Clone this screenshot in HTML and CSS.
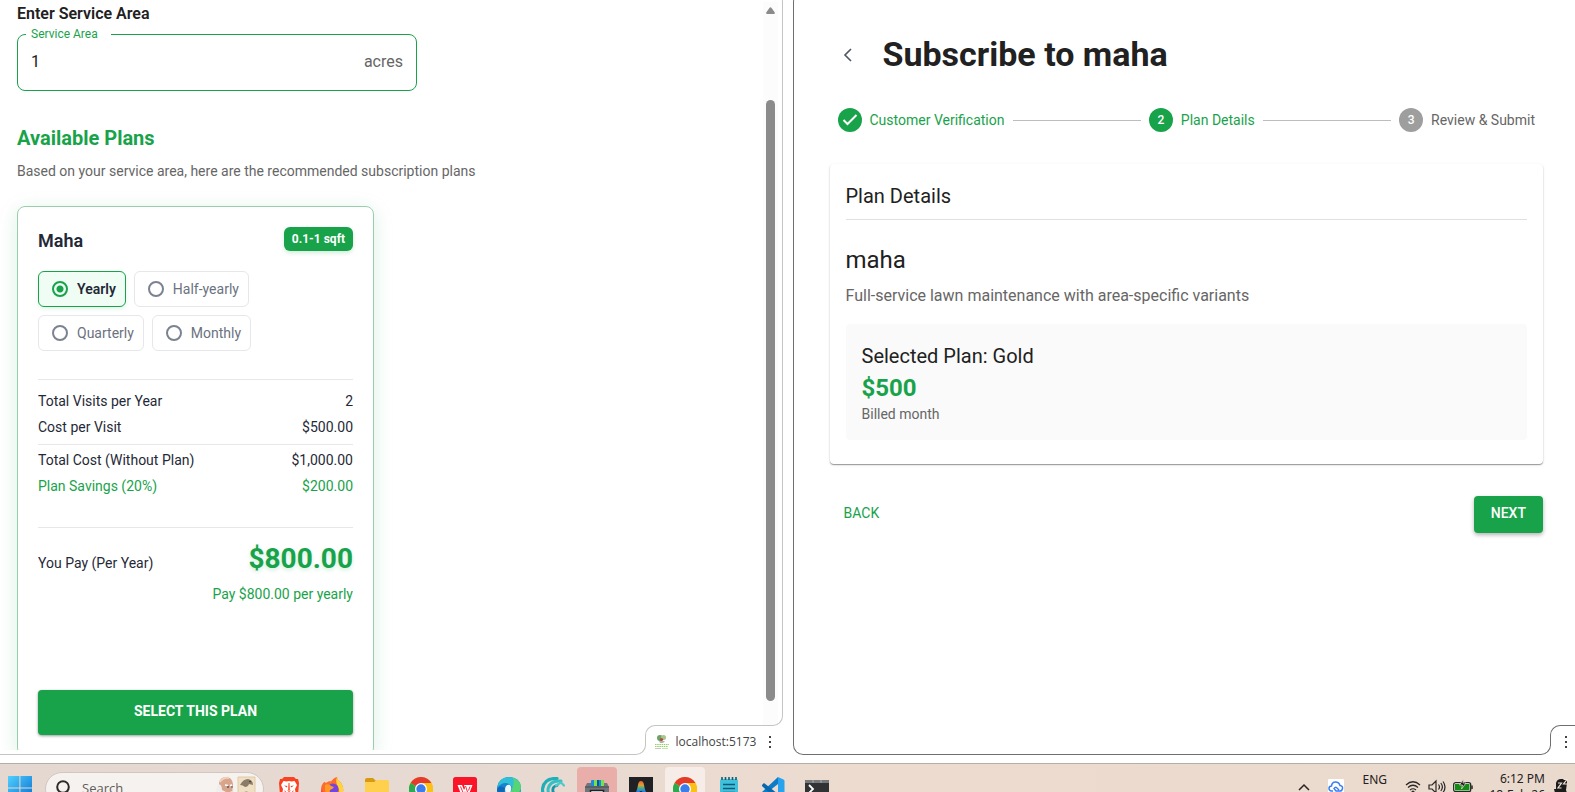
FILE: index.html
```html
<!DOCTYPE html>
<html lang="en">
<head>
<meta charset="utf-8">
<meta name="viewport" content="width=device-width, initial-scale=1">
<title>Subscribe to maha</title>
<link rel="stylesheet" href="styles.css">
</head>
<body>
<svg class="defs" aria-hidden="true">
  <symbol id="chrome" viewBox="0 0 24 24">
    <circle cx="12" cy="12" r="12" fill="#fbc116"/>
    <path d="M12 12 1.6 6A12 12 0 0 1 22.4 6Z" fill="#e33b2e"/>
    <path d="M1.6 6A12 12 0 0 0 12 24l5-9-5-3Z" fill="#2da94f"/>
    <path d="M12 6h10.4A12 12 0 0 1 12 24l5.2-9Z" fill="#fbc116"/>
    <circle cx="12" cy="12" r="6" fill="#fff"/><circle cx="12" cy="12" r="4.700" fill="#3b7ded"/>
  </symbol>
</svg>
<div class="panes">
  <section class="pane pane--left">
    <main class="plans">
      <h2 class="plans__heading">Enter Service Area</h2>
      <div class="field">
        <label class="field__label" for="area">Service Area</label>
        <input class="field__input" id="area" type="text" value="1">
        <span class="field__unit">acres</span>
      </div>
      <h1 class="plans__title">Available Plans</h1>
      <p class="plans__note">Based on your service area, here are the recommended subscription plans</p>
      <article class="card">
        <header class="card__head"><h3 class="card__name">Maha</h3><span class="badge">0.1-1 sqft</span></header>
        <div class="cycles">
          <label class="cycle cycle--on"><input class="cycle__radio" type="radio" name="cycle" checked>Yearly</label>
          <label class="cycle"><input class="cycle__radio" type="radio" name="cycle">Half-yearly</label>
          <label class="cycle"><input class="cycle__radio" type="radio" name="cycle">Quarterly</label>
          <label class="cycle"><input class="cycle__radio" type="radio" name="cycle">Monthly</label>
        </div>
        <dl class="costs costs--visits">
          <div class="cost"><dt>Total Visits per Year</dt><dd>2</dd></div>
          <div class="cost"><dt>Cost per Visit</dt><dd>$500.00</dd></div>
        </dl>
        <dl class="costs costs--total">
          <div class="cost"><dt>Total Cost (Without Plan)</dt><dd>$1,000.00</dd></div>
          <div class="cost cost--saving"><dt>Plan Savings (20%)</dt><dd>$200.00</dd></div>
        </dl>
        <div class="pay"><span>You Pay (Per Year)</span><strong class="pay__sum">$800.00</strong></div>
        <p class="pay__note">Pay $800.00 per yearly</p>
        <button class="select" type="button">SELECT THIS PLAN</button>
      </article>
    </main>
    <div class="scrollbar">
      <svg class="scrollbar__arrow" viewBox="0 0 9 7"><path d="M3.600.8a1 1 0 0 1 1.800 0L8.800 5.500Q9 7 8 7H1Q0 7 .2 5.500Z" fill="#8b8b8b"/></svg>
      <div class="scrollbar__thumb"></div>
    </div>
    <div class="edge"></div>
    <div class="shelf"></div>
    <div class="tab">
      <svg class="tab__logo" viewBox="0 0 16 16"><circle cx="6" cy="4" r="3" fill="#6ba368"/><circle cx="9.500" cy="3.500" r="2.500" fill="#a9c48d"/><circle cx="7.500" cy="5.500" r="1.600" fill="#b5483c"/><path d="M5 7h6l-2 2H6Z" fill="#a9b9a4"/><path d="M1 10.500h14M1 12.500h13" stroke="#8fd45e" stroke-width="1.200" stroke-dasharray="1.500 .7"/><path d="M1 14.500h6" stroke="#c6c6c6"/><path d="M8 14.500h6" stroke="#c4e6a9"/></svg>
      <span class="tab__host">localhost:5173</span>
      <button class="dots" type="button" aria-label="Tab menu"><i></i><i></i><i></i></button>
    </div>
  </section>
  <section class="pane pane--right">
    <main class="checkout">
      <header class="checkout__head">
        <button class="back-icon" type="button" aria-label="Go back"><svg width="10" height="16" viewBox="0 0 10 16" fill="none" stroke="#4b5563" stroke-width="1.600"><path d="M9 3 3 9l6 6"/></svg></button>
        <h1 class="checkout__title">Subscribe to maha</h1>
      </header>
      <ol class="steps">
        <li class="step"><span class="step__dot"><svg width="16" height="12" viewBox="0 0 16 12" fill="none" stroke="#fff" stroke-width="2"><path d="m1.500 6 4 4 9-9"/></svg></span>Customer Verification</li>
        <li class="steps__line"></li>
        <li class="step"><span class="step__dot">2</span>Plan Details</li>
        <li class="steps__line"></li>
        <li class="step step--next"><span class="step__dot">3</span>Review &amp; Submit</li>
      </ol>
      <section class="details">
        <h2 class="details__title">Plan Details</h2>
        <h3 class="details__name">maha</h3>
        <p class="details__text">Full-service lawn maintenance with area-specific variants</p>
        <div class="chosen">
          <h4 class="chosen__title">Selected Plan: Gold</h4>
          <p class="chosen__price">$500</p>
          <p class="chosen__note">Billed month</p>
        </div>
      </section>
      <div class="actions">
        <button class="actions__back" type="button">BACK</button>
        <button class="actions__next" type="button">NEXT</button>
      </div>
    </main>
    <div class="edge"></div>
    <div class="shelf"></div>
    <div class="tab">
      <button class="dots" type="button" aria-label="Tab menu"><i></i><i></i><i></i></button>
    </div>
  </section>
</div>
<footer class="taskbar">
  <div class="taskbar__row">
    <button class="start" type="button" aria-label="Start"><svg width="24" height="24" viewBox="0 0 24 24"><defs><linearGradient id="w" x1="0" y1="0" x2="1" y2="1"><stop offset="0" stop-color="#4fd0ff"/><stop offset="1" stop-color="#0a6fd0"/></linearGradient></defs><path d="M0 0h11.400v11.400H0zM12.400 0H24v11.400H12.400zM0 12.400h11.400V24H0zM12.400 12.400H24V24H12.400z" fill="url(#w)"/></svg></button>
    <div class="search">
      <svg width="16" height="18" viewBox="0 0 16 18" fill="none" stroke="#2d2a29" stroke-width="2"><circle cx="7" cy="7" r="5.800"/><path d="m11 11.500 4 5"/></svg>
      <input class="search__input" type="text" aria-label="Search" placeholder="Search">
      <svg class="search__art" width="40" height="26" viewBox="0 0 40 26"><path d="M1 12q-2 4 1 8l5 6h8l3-11-1-6Z" fill="#efeeed"/><path d="M3 7Q4 1 10 1t7 7l-1 10-5 4-5-6-3-3Z" fill="#d9a48c"/><path d="M2 8q4 0 4 6l6 3 4-2-1 9-7 2-6-6Q0 14 2 8Z" fill="#f0eeed"/><path d="M4 6Q7 1 13 2" stroke="#f0d0bd" stroke-width="2" fill="none"/><path d="m9 9 3 .5M14 9.500l2-.5" stroke="#fff" stroke-width="1.500"/><circle cx="12" cy="11" r=".9" fill="#475260"/><circle cx="16" cy="11" r=".8" fill="#475260"/><path d="M22 1h17v25H22z" fill="#f0dfc3" stroke="#decaa8"/><path d="M24 9q3-6 8-6 5 1 5 6l-4-1q-1 3-4 3-2-2-5-2Z" fill="#8b7c69"/><path d="M26 18q4-5 9 0l1 4-5-1-6 2Z" fill="#88765e"/><circle cx="34" cy="5.500" r=".8" fill="#34302b"/></svg>
    </div>
    <nav class="apps" aria-label="Applications">
      <button class="app" type="button" aria-label="Brave"><svg viewBox="0 0 24 24"><path d="M7 0h10l2 2 2 0 1 4-1 12-9 6-9-6L2 6l1-4h2Z" fill="#fb4220"/><path d="m6.500 4 3 .6L12 4l2.500.6 3-.6L20 8l-2 4 .5 3-3 2-3.500 3-3.500-3-3-2 .5-3-2-4Z" fill="#fff"/><path d="m7 8.500 3.500.5-.8 1.500ZM17 8.500l-3.500.5.8 1.500ZM10 13.500h4L12 15ZM11.500 6h1l.3 7h-1.600ZM7.500 13l2 2.500-1.500.5ZM16.500 13l-2 2.500 1.500.5Z" fill="#fb4220"/></svg></button>
      <button class="app" type="button" aria-label="Firefox"><svg viewBox="0 0 24 24"><path d="M3 5q1 0 2 1 2-2 5-2l-1 2q3-5 7-6 0 3 3 5l1 1q3 4 2 9-2 9-11 9T0 13Q0 8 3 5Z" fill="#ff6b2c"/><path d="M16 0q0 3 3 5 4 4 3 10-2 6-7 7 5-5 2-12-3-5-1-10Z" fill="#ffd43c"/><path d="M1 12q1 8 9 11-8 0-10-8Z" fill="#ff3163"/><circle cx="12" cy="12" r="5.500" fill="#7745db"/><path d="M4 8q4-2 6 1l3 1q-1 2-4 3-1 3 3 4-7 2-8-4Z" fill="#ff9a26"/></svg></button>
      <button class="app" type="button" aria-label="File Explorer"><svg viewBox="0 0 24 24"><path d="M0 3q0-2 2-2h6l3 3v2H0Z" fill="#d99a12"/><path d="M0 5h9l3-2h10q2 0 2 2v16H0Z" fill="#ffd04d"/><path d="M4 22v-4q0-2 2-2h12q2 0 2 2v4Z" fill="#2383ad"/></svg></button>
      <button class="app" type="button" aria-label="Chrome"><svg><use href="#chrome"/></svg></button>
      <button class="app" type="button" aria-label="WPS Office"><svg viewBox="0 0 24 24"><rect width="24" height="24" rx="2.500" fill="#fa1428"/><path d="M4.500 8H9l2 5 1-2-1-3h8.500l-3.500 9h-3L12 14l-1 3H8Z" fill="#fff"/><path d="m7.500 9.500 2.500 6M12.500 9l2 6M17 9.500l-1.500 4" stroke="#fa1428" stroke-width=".9"/></svg></button>
      <button class="app" type="button" aria-label="Edge"><svg viewBox="0 0 24 24"><circle cx="12" cy="12" r="12" fill="#1583cf"/><path d="M0 11Q2 0 12 0q11 0 12 10 0 6-6 7-5 0-4-3 3-4-2-7Q6 4 0 11Z" fill="#2fbfd8"/><path d="M16 1q8 3 8 10-1 6-7 6-4-1-3-3 4-5 2-13Z" fill="#57d473"/><path d="M8 12q1-5 5-4 2 2 1 5-2 6 5 8-10 3-11-9Z" fill="#eef7f8"/><path d="M8 11q-3 8 4 13Q1 24 0 13q2-6 8-2Z" fill="#1167b7"/></svg></button>
      <button class="app" type="button" aria-label="Editor"><svg viewBox="0 0 24 24" fill="none" stroke-linecap="round"><path d="M16 1.500Q3 1 1.500 12q0 8 6 12" stroke="#20aeb8" stroke-width="3.200"/><path d="M20 4Q9 3 7 12q0 6 4 12" stroke="#37c0c4" stroke-width="3"/><path d="M16 8.500q-5 1-4 6l4 8" stroke="#1894a7" stroke-width="2.800"/><path d="m15 8.500 5-3 3 3" stroke="#4cc9cb" stroke-width="2.200"/></svg></button>
      <button class="app app--alert" type="button" aria-label="Printer"><svg viewBox="0 0 24 24"><path d="M2 6h20l2 4v14H0V10Z" fill="#70767b"/><path d="M6 9V4q0-1 1-1h11q1 0 1 1v5Z" fill="#168ee0"/><path d="M9 3h3v6H9zM16 3h2q1 0 1 1v5h-3z" fill="#7be043"/><path d="M12 3h2v6h-2z" fill="#07589f"/><path d="M0 9.500h24v1H0z" fill="#444a4f"/><path d="M5.500 13.500h13V24h-13z" fill="#fff" stroke="#222" stroke-width="1.500"/></svg></button>
      <button class="app" type="button" aria-label="Launcher"><svg viewBox="0 0 24 24"><defs><linearGradient id="l" gradientUnits="userSpaceOnUse" x1="0" y1="4" x2="0" y2="18"><stop offset="0" stop-color="#f0602c"/><stop offset=".3" stop-color="#e0a03a"/><stop offset=".5" stop-color="#48b07c"/><stop offset=".75" stop-color="#2c79ee"/></linearGradient></defs><path d="M0 0h24v24H0z" fill="#202124"/><path d="M4 20Q8 15 9 8q.5-4 3-4t3 4q1 7 5 12l-3 1q-3-7-5-7t-5 7Z" fill="url(#l)"/></svg></button>
      <button class="app app--open" type="button" aria-label="Chrome window"><svg><use href="#chrome"/></svg></button>
      <button class="app" type="button" aria-label="Notepad"><svg viewBox="0 0 24 24"><rect x="3" y="2" width="18" height="24" rx="2" fill="#3fc1dc"/><path d="M5 0v3M8.500 0v3M12 0v3M15.500 0v3M19 0v3" stroke="#155c74" stroke-width="1.600"/><path d="M6 7.500h12M6 11.500h12M6 15.500h12" stroke="#0d5a77" stroke-width="1.400"/></svg></button>
      <button class="app" type="button" aria-label="VS Code"><svg viewBox="0 0 24 24"><path d="M17 0v7L3 18l-2-2v-1Z" fill="#0d7cc8"/><path d="m3 6 14 11v7L1 9V8Z" fill="#0867ad"/><path d="m17 0 5.500 2.500q1 .5 1 1.500v16q0 1-1 1.500L17 24Z" fill="#27a3ee"/></svg></button>
      <button class="app" type="button" aria-label="Terminal"><svg viewBox="0 0 24 24"><path d="M1 3h22q1 0 1 1v20H0V4q0-1 1-1Z" fill="#303234"/><path d="M0 6V4q0-1 1-1h22q1 0 1 1v2Z" fill="#75797c"/><path d="M8 3v3M16 3v3" stroke="#a7aaac"/><path d="m4 8 4 4-4 4M11 16h7" stroke="#fff" stroke-width="1.800" fill="none"/></svg></button>
    </nav>
    <div class="tray">
      <svg width="12" height="8" viewBox="0 0 12 8" fill="none" stroke="#272423" stroke-width="1.500"><path d="m1 7 5-5 5 5"/></svg>
      <svg class="tray__cloud" width="16" height="16" viewBox="0 0 16 16"><rect width="16" height="16" rx="1" fill="#fff"/><path d="M5 12H3.500A2.500 2.500 0 0 1 3.500 7Q4 3 7.500 3T12 6.500q3 .5 2.500 3T12 12H8L6 9.500q1-2 3-.5l2 2" fill="none" stroke="#3a7ff2" stroke-width="1.500"/></svg>
      <span class="tray__lang">ENG</span>
      <div class="tray__status">
        <svg width="16" height="16" viewBox="0 0 16 16" fill="none" stroke="#292625" stroke-width="1.200"><path d="M1 6q7-6.500 14 0M3 8.500q5-4.500 10 0M5 11q3-2.500 6 0"/><circle cx="8" cy="13" r="1" fill="#292625"/></svg>
        <svg width="18" height="16" viewBox="0 0 18 16" fill="none" stroke="#292625" stroke-width="1.200"><path d="M1 6h3l4-4v12l-4-4H1ZM10.500 5.500q2 2.500 0 5M12.800 4q3.200 4 0 8M15 2.500q4 5.500 0 11"/></svg>
        <svg width="20" height="16" viewBox="0 0 20 16"><rect x=".7" y="3.700" width="17" height="9" rx="2" fill="#fff" stroke="#292625" stroke-width="1.300"/><path d="M2 5h14.500v6.500H2z" fill="#138a16"/><path d="M19 6.500v3.500" stroke="#292625" stroke-width="1.500"/><path d="M10.500 0 6.500 6h3l-1 4 4.500-6h-3Z" fill="#171717" stroke="#e9dbd0" stroke-width=".8"/></svg>
      </div>
      <div class="tray__clock"><span>6:12 PM</span><span>18-Feb-26</span></div>
      <svg class="tray__bell" width="15" height="16" viewBox="0 0 15 16"><path d="M0 11h2V5q1-4 5-4h6v4l-1 7 1 3H1Z" fill="#1d1c1b"/><path d="M4 5h3.500L4 10h3.500M9.500 1.500H13L9.500 6H13" fill="none" stroke="#f0e4dc" stroke-width="1.200"/></svg>
    </div>
  </div>
</footer>
</body>
</html>
```
FILE: styles.css
```css
* { box-sizing: border-box; }

:root {
  --green: #18a34a;
  --ink: #212121;
  --slate: #1f2937;
  --muted: #666;
  --line: #e0e0e0;
}

body {
  display: flex;
  flex-direction: column;
  height: 100vh;
  margin: 0;
  overflow: hidden;
  background: #fff;
  color: var(--ink);
  font: 14px/20px Roboto, "Liberation Sans", sans-serif;
}

h1, h2, h3, h4, p, dl, dd, ol { margin: 0; padding: 0; }
button, input { font: inherit; }
button { border: 0; padding: 0; background: none; color: inherit; }
.defs { position: absolute; width: 0; height: 0; }

/* Split view */
.panes {
  flex: 1;
  display: grid;
  grid-template-columns: 1fr 1fr;
  gap: 10px;
  min-height: 0;
  padding-bottom: 8px;
}
.pane {
  --frame: #c4c4c4;
  --tab-width: 138px;
  position: relative;
  display: flex;
  min-width: 0;
  min-height: 0;
  overflow: hidden;
}
.pane--right { --frame: #6f6f6f; --tab-width: 25px; }

/* Pane outline, which steps round the tab in the lower right corner */
.edge { position: absolute; pointer-events: none; }
.pane--left .edge {
  top: -6px;
  right: 0;
  bottom: 29px;
  width: 128px;
  border: solid var(--frame);
  border-width: 0 1px 1px 0;
  border-radius: 0 8px 10px 0;
}
.pane--right .edge {
  top: -6px;
  left: 0;
  bottom: 10px;
  width: 10px;
  border-left: 1px solid var(--frame);
  border-top-left-radius: 8px;
}
.shelf {
  position: absolute;
  left: 0;
  right: calc(var(--tab-width) - 1px);
  bottom: 0;
  height: 11px;
  border: solid var(--frame);
  border-width: 0 1px 1px 0;
  border-bottom-right-radius: 10px;
  pointer-events: none;
}
.pane--right .shelf { border-left-width: 1px; border-bottom-left-radius: 10px; }
.tab {
  position: absolute;
  right: 0;
  bottom: 0;
  display: flex;
  align-items: center;
  width: var(--tab-width);
  height: 30px;
  padding: 4px 9px 0 9px;
}
.tab::before {
  content: "";
  position: absolute;
  top: 0;
  left: 0;
  width: 12px;
  height: 20px;
  border: solid var(--frame);
  border-width: 1px 0 0 1px;
  border-top-left-radius: 10px;
}
.pane--right .tab { padding-right: 5px; }
.pane--right .tab::before { width: 25px; }
.tab__logo { width: 16px; height: 16px; }
.tab__host { margin-left: 6px; color: #444; font: 12px/16px "Open Sans", sans-serif; }
.dots { display: grid; gap: 3px; margin-left: auto; padding: 0 3px; }
.dots i { width: 2px; height: 2px; background: #444; }

/* Plan chooser */
.plans { flex: 1; min-width: 0; margin-bottom: 5px; padding: 2px 17px 0; overflow: hidden; }
.plans__heading { font-size: 16px; line-height: 24px; font-weight: 600; }
.field {
  position: relative;
  display: flex;
  align-items: center;
  max-width: 400px;
  height: 57px;
  margin-top: 8px;
  padding: 0 13px 2px;
  border: 1px solid var(--green);
  border-radius: 8px;
}
.field__label {
  position: absolute;
  top: -9px;
  left: 8px;
  padding: 0 13px 0 5px;
  background: #fff;
  color: var(--green);
  font-size: 12px;
  line-height: 16px;
}
.field__input { flex: 1; min-width: 0; padding: 0; border: 0; outline: 0; background: none; color: var(--ink); font-size: 16px; line-height: 24px; }
.field__unit { color: var(--muted); font-size: 16px; }
.plans__title { margin-top: 35px; color: var(--green); font-size: 20px; line-height: 24px; font-weight: 700; }
.plans__note { margin-top: 11px; color: var(--muted); }

.card {
  max-width: 357px;
  margin-top: 25px;
  padding: 20px;
  border: 1px solid #98ceab;
  border-radius: 8px;
  box-shadow: 0 4px 20px rgba(22, 163, 74, .15);
  color: var(--slate);
}
.card__head { display: flex; justify-content: space-between; }
.card__name { font-size: 18px; line-height: 28px; font-weight: 600; }
.badge {
  height: 24px;
  padding: 0 8px;
  border-radius: 6px;
  background: var(--green);
  box-shadow: 0 2px 4px rgba(22, 163, 74, .2);
  color: #fff;
  font-size: 12px;
  line-height: 24px;
  font-weight: 700;
}
.cycles { display: flex; flex-wrap: wrap; gap: 8px; margin-top: 16px; padding-right: 60px; }
.cycle {
  display: flex;
  align-items: center;
  gap: 9px;
  height: 36px;
  padding: 0 9px 0 13px;
  border: 1px solid #e5e7eb;
  border-radius: 6px;
  color: #6b7280;
}
.cycle--on {
  border-color: var(--green);
  background: #f0fdf4;
  box-shadow: 0 2px 4px rgba(22, 163, 74, .12);
  color: var(--slate);
  font-weight: 600;
}
.cycle__radio {
  appearance: none;
  width: 16px;
  height: 16px;
  margin: 0;
  border: 2px solid #7b8290;
  border-radius: 50%;
}
.cycle__radio:checked { border-color: var(--green); background: radial-gradient(circle, var(--green) 3px, transparent 4px); }

.costs { border-top: 1px solid #e5e7eb; }
.costs--visits { margin-top: 28px; padding: 8px 0 4px; }
.costs--total { padding: 2px 0 28px; border-bottom: 1px solid #e5e7eb; }
.cost { display: flex; justify-content: space-between; line-height: 26px; }
.cost--saving { color: var(--green); }
.pay { display: flex; align-items: baseline; justify-content: space-between; margin-top: 11px; }
.pay__sum { color: var(--green); font-size: 28px; line-height: 40px; text-shadow: 0 2px 4px rgba(22, 163, 74, .2); }
.pay__note { margin-top: 5px; color: var(--green); text-align: right; }
.select {
  width: 100%;
  height: 45px;
  margin-top: 86px;
  padding-bottom: 3px;
  border-radius: 4px;
  background: var(--green);
  box-shadow: 0 1px 3px rgba(0, 0, 0, .4);
  color: #fff;
  font-weight: 700;
}

.scrollbar { flex: 0 0 15px; margin: 2px 5px 29px 0; padding: 5px 3px; background: #fcfcfc; }
.scrollbar__arrow { display: block; width: 9px; height: 7px; }
.scrollbar__thumb { height: 601px; margin-top: 86px; border-radius: 5px; background: #8b8b8b; }

/* Subscription steps */
.checkout { flex: 1; min-width: 0; padding: 32px 32px 0 37px; }
.checkout__head { display: flex; align-items: center; gap: 19px; }
.back-icon { display: grid; place-items: center; width: 34px; height: 34px; }
.checkout__title { font-size: 34px; line-height: 44px; font-weight: 700; }
.steps { display: flex; align-items: center; gap: 8px; margin-top: 32px; padding: 0 8px; list-style: none; }
.step { display: flex; align-items: center; gap: 8px; color: var(--green); }
.step__dot { display: grid; place-items: center; width: 24px; height: 24px; border-radius: 50%; background: var(--green); color: #fff; font-size: 12px; font-weight: 500; }
.step--next { color: var(--muted); }
.step--next .step__dot { background: #9e9e9e; }
.steps__line { flex: 1; height: 1px; background: #bdbdbd; }
.details {
  margin-top: 32px;
  padding: 16px 16px 24px;
  border-radius: 4px;
  box-shadow: 0 1px 1px rgba(0, 0, 0, .35), 0 1px 3px rgba(0, 0, 0, .12);
}
.details__title { padding-bottom: 7px; border-bottom: 1px solid var(--line); font-size: 20px; line-height: 32px; font-weight: 400; }
.details__name { margin-top: 24px; font-size: 24px; line-height: 32px; font-weight: 400; }
.details__text { margin-top: 8px; color: var(--muted); font-size: 16px; line-height: 24px; }
.chosen { margin-top: 16px; padding: 16px; border-radius: 4px; background: #fafafa; }
.chosen__title { font-size: 20px; line-height: 32px; font-weight: 400; }
.chosen__price { color: var(--green); font-size: 24px; line-height: 32px; font-weight: 700; }
.chosen__note { color: var(--muted); }
.actions { display: flex; justify-content: space-between; margin-top: 32px; }
.actions__back, .actions__next { height: 37px; padding: 0 17px 3px; border-radius: 4px; font-weight: 500; }
.actions__back { padding-left: 14px; color: var(--green); font-weight: 400; }
.actions__next { background: var(--green); box-shadow: 0 2px 4px rgba(0, 0, 0, .3); color: #fff; }

/* Taskbar, of which the window shows the upper part */
.taskbar {
  flex: 0 0 29px;
  overflow: hidden;
  border-top: 1px solid #b4aeaa;
  background: linear-gradient(90deg, #e5d8d0, #e7dad2 30%, #eddbcf 55%, #ead9cd);
  color: #242120;
  font: 12px/16px "Noto Sans", sans-serif;
}
.taskbar__row { display: flex; align-items: flex-start; height: 48px; padding-left: 8px; }
.start { width: 24px; height: 24px; margin-top: 12px; }
.search {
  display: flex;
  align-items: flex-start;
  width: 219px;
  height: 34px;
  margin: 8px 5px 0 13px;
  padding: 7px 7px 0 10px;
  border: 1px solid #d2c6bf;
  border-radius: 17px;
  background: #f6f2ef;
}
.search__input { flex: 1; min-width: 0; height: 16px; padding: 0 0 0 10px; border: 0; background: none; font: 13px/16px "Open Sans", sans-serif; }
.search__input::placeholder { color: #605c5a; opacity: 1; }
.search__art { flex: none; margin-top: -4px; }
.apps { display: flex; gap: 4px; }
.app { width: 40px; height: 44px; margin-top: 3px; padding: 9px 8px; border-radius: 4px; }
.app svg { display: block; width: 24px; height: 24px; }
.app--alert { background: #e9aea9; }
.app--open { background: #f6ede8; }
.tray { display: flex; align-items: flex-start; margin-left: auto; padding-right: 6px; }
.tray > svg:first-child { margin-top: 19px; }
.tray__cloud { margin: 15px 0 0 18px; }
.tray__lang { margin: 8px 0 0 18px; }
.tray__status { display: flex; gap: 7px; margin: 15px 0 0 18px; }
.tray__clock { display: grid; width: 64px; margin: 7px 0 0 8px; text-align: right; }
.tray__bell { margin: 14px 0 0 9px; }
```
